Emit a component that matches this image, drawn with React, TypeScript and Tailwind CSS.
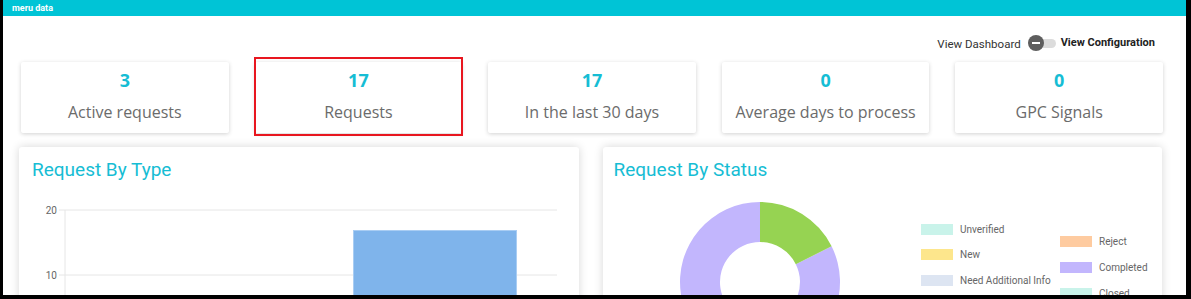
import React from "react";

const stats = [
  { value: "3", label: "Active requests" },
  { value: "17", label: "Requests", marked: true },
  { value: "17", label: "In the last 30 days" },
  { value: "0", label: "Average days to process" },
  { value: "0", label: "GPC Signals" },
];

const legend = [
  { label: "Unverified", color: "#c9f3ea", x: 318, y: 29 },
  { label: "New", color: "#fde68c", x: 318, y: 54 },
  { label: "Need Additional Info", color: "#dde5f2", x: 318, y: 80 },
  { label: "Reject", color: "#fecba0", x: 457, y: 41 },
  { label: "Completed", color: "#c2b6fd", x: 457, y: 67 },
  { label: "Closed", color: "#c9f3ea", x: 457, y: 93 },
];

const StatCard = ({ value, label, marked }: { value: string; label: string; marked?: boolean }) => (
  <div className="relative">
    <div className="h-[71px] bg-white rounded-[2px] shadow-[0_1px_4px_rgba(0,0,0,0.18)] flex flex-col items-center pt-[8px]">
      <div className="text-[18px] leading-[20px] font-bold text-[#16bdd4]">{value}</div>
      <div className="mt-[11px] text-[16px] leading-[22px] text-[#6b6b6b]">{label}</div>
    </div>
    {marked && (
      <div className="absolute -top-[5px] -left-[1px] -right-[1px] -bottom-[3px] border-2 border-[#e8161f]" />
    )}
  </div>
);

const TypeChart = () => (
  <svg width="540" height="110" className="block">
    <line x1="40" y1="15" x2="538" y2="15" stroke="#e6e6e6" />
    <line x1="40" y1="80" x2="538" y2="80" stroke="#e6e6e6" />
    <line x1="46" y1="15" x2="46" y2="110" stroke="#e6e6e6" />
    <text x="38" y="18.5" textAnchor="end" fontSize="10" fill="#666" fontFamily="Roboto, Arial, sans-serif">20</text>
    <text x="38" y="83.5" textAnchor="end" fontSize="10" fill="#666" fontFamily="Roboto, Arial, sans-serif">10</text>
    <rect x="334.5" y="35.5" width="163" height="80" fill="#7fb4eb" stroke="#a9cdf3" />
  </svg>
);

const StatusChart = () => (
  <svg width="556" height="110" className="block">
    <path d="M228.6,51.3 A80,80 0 1 1 157,7 L157,47 A40,40 0 1 0 192.8,69.2 Z" fill="#c2b6fd" />
    <path d="M157,7 A80,80 0 0 1 228.6,51.3 L192.8,69.2 A40,40 0 0 0 157,47 Z" fill="#96d352" />
    {legend.map((l) => (
      <g key={l.label}>
        <rect x={l.x} y={l.y} width="32" height="11" fill={l.color} />
        <text x={l.x + 39} y={l.y + 8.5} fontSize="10" fill="#666" fontFamily="Roboto, Arial, sans-serif">
          {l.label}
        </text>
      </g>
    ))}
  </svg>
);

const App = () => {
  return (
    <div className="w-[1191px] h-[299px] bg-black pl-[3px] pr-[5px] pb-[4px] font-['Open_Sans',sans-serif]">
      <div className="h-full bg-white overflow-hidden flex flex-col">
        <div className="h-[18px] bg-[#00c4d6] pl-[9px] text-[9px] leading-[16px] font-bold text-white font-['Roboto',sans-serif]">
          meru data
        </div>

        <div className="flex justify-end items-center pt-[17px] pr-[31px] h-[51px] font-['Roboto',sans-serif] text-[11px] text-[#333]">
          <span className="mt-[3px] text-[11.5px]">View Dashboard</span>
          <div className="relative ml-[7px] w-[29px] h-[16px] flex items-center">
            <div className="ml-[6px] w-[22px] h-[9px] rounded-full bg-[#dcdcdc]" />
            <div className="absolute left-0 top-0 w-[16px] h-[16px] rounded-full bg-[#5e5e5e] flex items-center justify-center">
              <div className="w-[8px] h-[2px] bg-white" />
            </div>
          </div>
          <span className="ml-[4px] font-bold text-[#222]">View Configuration</span>
        </div>

        <div className="grid grid-cols-5 gap-[26px] pl-[18px] pr-[23px] mt-[9px]">
          {stats.map((s, i) => (
            <StatCard key={i} value={s.value} label={s.label} marked={s.marked} />
          ))}
        </div>

        <div className="grid grid-cols-2 gap-[24px] pl-[16px] pr-[24px] mt-[14px] flex-1">
          <div className="bg-white rounded-[3px] shadow-[0_0_10px_rgba(0,0,0,0.16)]">
            <div className="pl-[13px] pt-[11px] text-[19px] leading-[24px] text-[#16bdd4] font-['Roboto',sans-serif]">
              Request By Type
            </div>
            <div className="mt-[13px]">
              <TypeChart />
            </div>
          </div>
          <div className="bg-white rounded-[3px] shadow-[0_0_10px_rgba(0,0,0,0.16)]">
            <div className="pl-[11px] pt-[11px] text-[19px] leading-[24px] text-[#16bdd4] font-['Roboto',sans-serif]">
              Request By Status
            </div>
            <div className="mt-[13px]">
              <StatusChart />
            </div>
          </div>
        </div>
      </div>
    </div>
  );
};

export default App;
